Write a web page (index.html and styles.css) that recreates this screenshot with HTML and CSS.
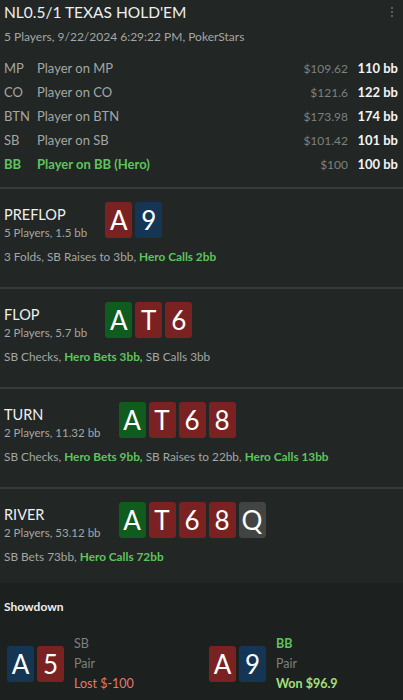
FILE: index.html
```html
<!DOCTYPE html>
<html lang="en">
  <head>
    <meta charset="UTF-8" />
    <meta name="viewport" content="width=device-width, initial-scale=1.0" />
    <title>Hand History</title>
    <link rel="stylesheet" href="styles.css">
  </head>
  <body>
    <div id="hand">
      <div class="header">
        <h1 class="hand-title">NL0.5/1 TEXAS HOLD'EM</h1>
        <span class="menu">
          <svg width="4" height="12" viewBox="0 0 4 12">
            <circle cx="2" cy="2" r="1" fill="#6f7472" />
            <circle cx="2" cy="6" r="1" fill="#6f7472" />
            <circle cx="2" cy="10" r="1" fill="#6f7472" />
          </svg>
        </span>
        <p class="hand-info">5 Players, 9/22/2024 6:29:22 PM, PokerStars</p>

        <ul class="players">
          <li><span class="pos">MP</span><span class="name">Player on MP</span><span class="stack">$109.62</span><span class="bb">110 bb</span></li>
          <li><span class="pos">CO</span><span class="name">Player on CO</span><span class="stack">$121.6</span><span class="bb">122 bb</span></li>
          <li><span class="pos">BTN</span><span class="name">Player on BTN</span><span class="stack">$173.98</span><span class="bb">174 bb</span></li>
          <li><span class="pos">SB</span><span class="name">Player on SB</span><span class="stack">$101.42</span><span class="bb">101 bb</span></li>
          <li class="hero"><span class="pos">BB</span><span class="name">Player on BB (Hero)</span><span class="stack">$100</span><span class="bb">100 bb</span></li>
        </ul>
      </div>

      <div class="street">
        <div class="street-top">
          <div class="street-name">
            <h2>PREFLOP</h2>
            <p>5 Players, 1.5 bb</p>
          </div>
          <div class="cards">
            <span class="card red">A</span>
            <span class="card blue">9</span>
          </div>
        </div>
        <p class="actions">3 Folds, SB Raises to 3bb, <b>Hero Calls 2bb</b></p>
      </div>

      <div class="street">
        <div class="street-top">
          <div class="street-name">
            <h2>FLOP</h2>
            <p>2 Players, 5.7 bb</p>
          </div>
          <div class="cards">
            <span class="card green">A</span>
            <span class="card red">T</span>
            <span class="card red">6</span>
          </div>
        </div>
        <p class="actions">SB Checks, <b>Hero Bets 3bb,</b> SB Calls 3bb</p>
      </div>

      <div class="street">
        <div class="street-top">
          <div class="street-name">
            <h2>TURN</h2>
            <p>2 Players, 11.32 bb</p>
          </div>
          <div class="cards">
            <span class="card green">A</span>
            <span class="card red">T</span>
            <span class="card red">6</span>
            <span class="card red">8</span>
          </div>
        </div>
        <p class="actions">SB Checks, <b>Hero Bets 9bb,</b> SB Raises to 22bb, <b>Hero Calls 13bb</b></p>
      </div>

      <div class="street last">
        <div class="street-top">
          <div class="street-name">
            <h2>RIVER</h2>
            <p>2 Players, 53.12 bb</p>
          </div>
          <div class="cards">
            <span class="card green">A</span>
            <span class="card red">T</span>
            <span class="card red">6</span>
            <span class="card red">8</span>
            <span class="card gray">Q</span>
          </div>
        </div>
        <p class="actions">SB Bets 73bb, <b>Hero Calls 72bb</b></p>
      </div>

      <div class="showdown">
        <h3>Showdown</h3>
        <div class="showdown-grid">
          <div class="result">
            <div class="cards">
              <span class="card blue">A</span>
              <span class="card red">5</span>
            </div>
            <div class="result-info">
              <span class="who">SB</span>
              <span class="hand-rank">Pair</span>
              <span class="lost">Lost $-100</span>
            </div>
          </div>
          <div class="result">
            <div class="cards">
              <span class="card red">A</span>
              <span class="card blue">9</span>
            </div>
            <div class="result-info">
              <span class="who hero">BB</span>
              <span class="hand-rank">Pair</span>
              <span class="won">Won $96.9</span>
            </div>
          </div>
        </div>
      </div>
    </div>
  </body>
</html>
```

FILE: styles.css
```css
* {
  box-sizing: border-box;
}
body {
  margin: 0;
  background-color: #222624;
  font-family: Lato, "Open Sans", Arial, sans-serif;
  color: #a3a6a5;
}
#hand {
  width: 403px;
  height: 700px;
  overflow: hidden;
}
.header {
  position: relative;
  padding: 2px 5px 11px 4px;
  border-bottom: 2px solid #383b3a;
}
.hand-title {
  margin: 0;
  font-size: 15.5px;
  font-weight: 400;
  line-height: 20px;
  color: #eef0ef;
}
.menu {
  position: absolute;
  top: 2px;
  right: 9px;
}
.hand-info {
  margin: 5px 0 9px;
  font-size: 12px;
  line-height: 20px;
}
.players {
  list-style: none;
  margin: 0;
  padding: 0;
}
.players li {
  display: flex;
  align-items: center;
  height: 24px;
  font-size: 13px;
}
.players .pos {
  width: 33px;
}
.players .name {
  flex: 1;
}
.players .stack {
  color: #7d817f;
  font-size: 12px;
}
.players .bb {
  width: 50px;
  text-align: right;
  font-weight: 700;
  color: #f2f4f3;
}
.players .hero .pos,
.players .hero .name {
  color: #5ec45e;
  font-weight: 700;
}
.street {
  padding: 13px 4px 21px;
  border-bottom: 2px solid #383b3a;
}
.street.last {
  border-bottom: none;
  padding-bottom: 17px;
}
.street-top {
  display: flex;
  align-items: flex-start;
  height: 36px;
}
.street-name {
  margin-right: 18px;
  padding-top: 4px;
}
.street-name h2 {
  margin: 0;
  font-size: 14.5px;
  font-weight: 400;
  line-height: 18px;
  color: #eef0ef;
}
.street-name p {
  margin: 0;
  font-size: 11.5px;
  line-height: 18px;
}
.cards {
  display: flex;
  gap: 3px;
}
.card {
  display: flex;
  align-items: center;
  justify-content: center;
  width: 27px;
  height: 36px;
  border-radius: 3px;
  font-size: 26px;
  color: #fff;
}
.card.red {
  background-color: #7a2222;
}
.card.blue {
  background-color: #143553;
}
.card.green {
  background-color: #105b1e;
}
.card.gray {
  background-color: #424444;
}
.actions {
  margin: 10px 0 0;
  font-size: 11.8px;
  line-height: 18px;
}
.actions b {
  color: #5ec45e;
  font-weight: 700;
}
.showdown {
  background-color: #1c201e;
  padding: 15px 4px 10px;
  height: 130px;
}
.showdown h3 {
  margin: 0;
  font-size: 12px;
  font-weight: 700;
  line-height: 18px;
  color: #eef0ef;
}
.showdown-grid {
  display: grid;
  grid-template-columns: 202px 1fr;
  padding-left: 3px;
  margin-top: 18px;
}
.result {
  display: flex;
  align-items: center;
}
.result-info {
  display: flex;
  flex-direction: column;
  margin-left: 10px;
  font-size: 12.5px;
  line-height: 20px;
  color: #7d817f;
}
.result-info .who.hero {
  color: #5ec45e;
  font-weight: 700;
}
.lost {
  color: #e07b6d;
}
.won {
  color: #a3e07c;
  font-weight: 700;
}
```
